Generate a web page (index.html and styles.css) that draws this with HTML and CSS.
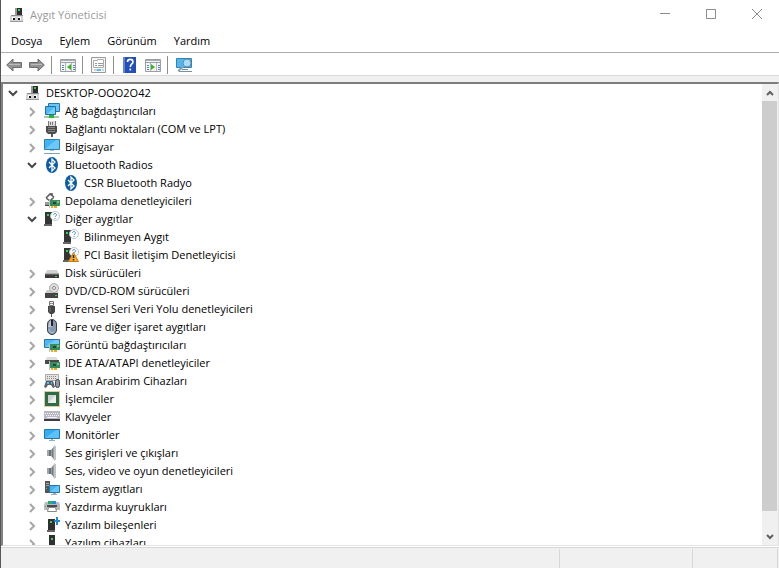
FILE: index.html
```html
<!DOCTYPE html>
<html lang="tr">
<head>
    <meta charset="UTF-8">
    <meta name="viewport" content="width=device-width, initial-scale=1.0">
    <title>Aygıt Yöneticisi</title>
    <link rel="stylesheet" href="styles.css">
</head>
<body>
    <!-- Icon set -->
    <svg class="sprite" aria-hidden="true">
        <symbol id="down" viewBox="0 0 10 10"><path d="M1 3l4 4 4-4" fill="none" stroke="#484848" stroke-width="2"/></symbol>
        <symbol id="right" viewBox="0 0 10 10"><path d="M3 1l4 4-4 4" fill="none" stroke="#a6a6a6" stroke-width="2"/></symbol>
        <symbol id="scroll-arrow" viewBox="0 0 10 10"><path d="M2 3l3 3 3-3" fill="none" stroke="#606060" stroke-width="2"/></symbol>
        <symbol id="device" viewBox="0 0 16 16">
            <path d="M6 1h2v7H6z" fill="#999"/><path d="M8 1h5v7H8z" fill="#2e2e2e"/><path d="M9 2h2v2H9z" fill="#2fd045"/>
            <path d="M2 8h12v2H2z" fill="#8e8e8e"/><path d="M1 9h13v6H1z" fill="#d4d4d8"/><path d="M1 14h13v1H1z" fill="#9b9b9f"/>
            <path d="M3 10h3v3H3zM9 10h3v3H9z" fill="#fff"/><path d="M4 11h2v2H4zM9 11h2v2H9z" fill="#111"/>
        </symbol>
        <symbol id="network" viewBox="0 0 16 16">
            <path d="M4.500.5h11v8h-11z" fill="#69c6f5" stroke="#2677a8"/><path d="M1.500 3.500h10v8h-10z" fill="#4bb7f4" stroke="#2371a3"/>
            <path d="M3 11l8-7v7z" fill="#78cffa"/><path d="M7 12h2v1H7z" fill="#999"/>
            <path d="M0 13h15v2H0z" fill="#a8c6a8"/><path d="M5 12h5v3H5z" fill="#28b33e"/>
        </symbol>
        <symbol id="port" viewBox="0 0 16 16">
            <path d="M4 0h8v5H4z" fill="#ddd"/><path d="M4.500 0v5M6.500 1v3M8.500 1v3M11.500 0v5" stroke="#777"/>
            <path d="M2 5h11v6l-2 2H4l-2-2z" fill="#4c4c4c"/><path d="M4 6.500h7M4 8.500h7M4 10.500h7" stroke="#858585"/><path d="M7 13h2v3H7z" fill="#555"/>
        </symbol>
        <symbol id="computer" viewBox="0 0 16 16">
            <path d="M.5.5h15v10H.5z" fill="#43b3f5" stroke="#2c7dac"/><path d="M1 10L12 1h3v9z" fill="#6cc8f9"/>
            <path d="M6 11h4v1H6z" fill="#aac2d0"/><path d="M0 14h16v1H0z" fill="#7fa3b8"/>
        </symbol>
        <symbol id="monitor" viewBox="0 0 16 16">
            <path d="M.5 2.500h15v9H.5z" fill="#35abf3" stroke="#2577a8"/><path d="M1 11L12 3h3v8z" fill="#5bc1f9"/>
            <path d="M7 12h2v1H7zM5 13h6v1H5z" fill="#96adba"/>
        </symbol>
        <symbol id="bluetooth" viewBox="0 0 16 16">
            <ellipse cx="8" cy="8" rx="6" ry="8" fill="#0b5ca8"/><path d="M5 5l6 6-3 3V2l3 3-6 6" fill="none" stroke="#fff" stroke-width="1.300"/>
        </symbol>
        <symbol id="card" viewBox="0 0 16 16">
            <path d="M6 7h10v6H6z" fill="#3a8a5c"/><path d="M9 9h3v2H9z" fill="#164c30"/><path d="M13 8h2v2h-2z" fill="#75c58c"/>
            <path d="M7 13h2v2H7zM10 13h3v2h-3z" fill="#efaa22"/><path d="M5.500 6v9" stroke="#b9c6be"/>
        </symbol>
        <symbol id="storage" viewBox="0 0 16 16">
            <path d="M6 1h3M2 5l4-4 4 3M2 5l4 3 4-4" fill="none" stroke="#555" stroke-width="1.500"/><path d="M1 9h5v3H1z" fill="#999"/><path d="M1 12h5v1H1z" fill="#444"/><use href="#card"/>
        </symbol>
        <symbol id="unknown" viewBox="0 0 16 16">
            <path d="M1 1h7v13H1z" fill="#353535"/><path d="M0 13h8v2H0z" fill="#666"/><path d="M3 3h2v2H3z" fill="#36d34d"/>
            <circle cx="11" cy="5" r="4.500" fill="#fff" stroke="#b8c5cc"/><path d="M9.500 4c0-2 3-2 3 0 0 1-1.500 1-1.500 2M11 7v1" fill="none" stroke="#3b8dca"/>
        </symbol>
        <symbol id="warning" viewBox="0 0 16 16">
            <use href="#unknown"/><path d="M10.500 5.500l5 9h-10z" fill="#f8ad20" stroke="#c87e12"/><path d="M10.500 8v3M10.500 12v1.500" stroke="#222" stroke-width="1.400"/>
        </symbol>
        <symbol id="disk" viewBox="0 0 16 16">
            <path d="M3 5h10l2 4H1z" fill="#d2d2d2"/><path d="M1 9h14v4H1z" fill="#3b3b3b"/><path d="M1 9h14" stroke="#888"/><path d="M11 11h2v1h-2z" fill="#3bd152"/>
        </symbol>
        <symbol id="dvd" viewBox="0 0 16 16">
            <path d="M3 7h9l3 3H1z" fill="#ccc"/><path d="M1 10h13v5H1z" fill="#444"/><circle cx="10" cy="5" r="4.500" fill="#ddd" stroke="#aaa"/><circle cx="10" cy="5" r="1.500" fill="#fff" stroke="#888"/>
            <path d="M11 12h2v1h-2z" fill="#3bd152"/>
        </symbol>
        <symbol id="usb" viewBox="0 0 16 16">
            <path d="M5.500.5h4v4h-4z" fill="#eee" stroke="#777"/><path d="M6.500 2.500h1M8.500 2.500h1" stroke="#444"/><path d="M4 5h7v6l-2 2H6l-2-2z" fill="#454545"/><path d="M6 6v5" stroke="#777"/><path d="M7 13h1v3H7z" fill="#555"/>
        </symbol>
        <symbol id="mouse" viewBox="0 0 16 16">
            <rect x="3.500" y=".5" width="9" height="15" rx="4.500" fill="#8799b0" stroke="#39404c"/><path d="M5 5c0-3 2-4 3-4v7H4z" fill="#bdc9d7"/><path d="M8 1v6" stroke="#222" stroke-width="2"/><path d="M5 10c0 4 4 4 5 3" fill="none" stroke="#b8c8dc"/>
        </symbol>
        <symbol id="display" viewBox="0 0 16 16">
            <path d="M.5 2.500h15v8H.5z" fill="#4bb8f4" stroke="#2577a8"/><path d="M1 10l10-7h4v7z" fill="#74cbf8"/><use href="#card"/>
        </symbol>
        <symbol id="ide" viewBox="0 0 16 16">
            <path d="M3 2h9l3 4H1z" fill="#ddd"/><path d="M1 5h14v4H1z" fill="#4a4a4a"/><use href="#card"/>
        </symbol>
        <symbol id="hid" viewBox="0 0 16 16">
            <path d="M1.500 1.500h13v6h-13z" fill="#e3e3e3" stroke="#aaa"/><path d="M3 3.500h10M3 5.500h10" stroke="#888" stroke-dasharray="1 1"/>
            <path d="M0 14l2-6h7l2 6-2 1-2-3H4l-2 3z" fill="#59636c"/><path d="M3 9h2v2H3zM7 9h1v2H7z" fill="#58baf1"/><rect x="11.500" y="6.500" width="4" height="8" rx="2" fill="#8b99a8" stroke="#444"/>
        </symbol>
        <symbol id="cpu" viewBox="0 0 16 16">
            <path d="M.5.5h15v15H.5z" fill="none" stroke="#c09a3e" stroke-dasharray="1 1"/><path d="M1 1h14v14H1z" fill="#2f6b49"/><path d="M4 4h8v8H4z" fill="#cfd2d0"/><path d="M12 4v8H4z" fill="#ececec"/>
        </symbol>
        <symbol id="keyboard" viewBox="0 0 16 16">
            <path d="M0 2h16v9H0z" fill="#b9b9c3"/><path d="M1 4.500h14M2 6.500h13" stroke="#f4f4f8" stroke-dasharray="1 1"/><path d="M3 8.500h10" stroke="#f4f4f8"/><path d="M0 10h16v2H0z" fill="#3c3c42"/>
        </symbol>
        <symbol id="speaker" viewBox="0 0 16 16">
            <path d="M3 5h4v6H3z" fill="#68737c"/><path d="M3 5h2v6H3z" fill="#a0a6ab"/><path d="M7 5l4-5v16l-4-5z" fill="#989ea4"/><path d="M10 1h2v14h-2z" fill="#c1c5c9"/><path d="M8.500 4v8" stroke="#747c83"/>
        </symbol>
        <symbol id="system" viewBox="0 0 16 16">
            <path d="M1 0h5v12H1z" fill="#555"/><path d="M2 2.500h3M2 4.500h3" stroke="#aaa"/><path d="M2 7h1v1H2z" fill="#3bd152"/><path d="M5.500 4.500h10v7h-10z" fill="#40b2f5" stroke="#2577a8"/><path d="M6 11l7-6h2v6z" fill="#68c7f9"/><path d="M9 12h3v1h1v1H7v-1h2z" fill="#9bb0bd"/>
        </symbol>
        <symbol id="printer" viewBox="0 0 16 16">
            <path d="M4 2h8v4H4z" fill="#1f8fdf"/><path d="M5 2h3v3H5z" fill="#32b548"/><path d="M1 3h3v2h8V3h3l1 3v5H0V6z" fill="#b7b9bd"/><path d="M3 6h10v2H3z" fill="#4a4a4a"/><path d="M1 7h1v1H1z" fill="#3bd152"/><path d="M4.500 8.500h7l1 4h-9z" fill="#fff" stroke="#888"/>
        </symbol>
        <symbol id="component" viewBox="0 0 16 16">
            <path d="M4 2h7v11H4z" fill="#303030"/><path d="M3 13h8v2H3z" fill="#666"/><path d="M6 4h2v2H6z" fill="#3bd152"/><path d="M12 0h2v3h2v2h-2v3h-2V5h-2V3h2z" fill="#2589d0"/>
        </symbol>
        <symbol id="software" viewBox="0 0 16 16">
            <path d="M5 0h6v13H5z" fill="#303030"/><path d="M4 13h9v2H4z" fill="#555"/><path d="M7 3h2v2H7z" fill="#3bd152"/>
        </symbol>
        <symbol id="back" viewBox="0 0 16 16">
            <path d="M.7 8l6.300-6v3.500h8.500v5H7V14z" fill="#939393" stroke="#6c6c6c"/><path d="M3 7.500h11" stroke="#bbb"/>
        </symbol>
        <symbol id="forward" viewBox="0 0 16 16">
            <path d="M15.300 8L9 2v3.500H.5v5H9V14z" fill="#939393" stroke="#6c6c6c"/><path d="M2 7.500h11" stroke="#bbb"/>
        </symbol>
        <symbol id="console" viewBox="0 0 16 16">
            <path d="M.5 2.500h15v12H.5z" fill="#f4f4f4" stroke="#9b9fa4"/><path d="M1 3h14v1H1z" fill="#a5acb5"/><path d="M1 5.500h14" stroke="#9aa0a8"/>
            <path d="M5.500 6v8M11.500 6v8" stroke="#b3b8be"/><path d="M2 8.500h2M2 10.500h2M2 12.500h2M13 8.500h2M13 10.500h2M13 12.500h2" stroke="#5587bd"/>
        </symbol>
        <symbol id="show" viewBox="0 0 16 16"><use href="#console"/><path d="M11 7v6l-4-3z" fill="#36b51e"/></symbol>
        <symbol id="action" viewBox="0 0 16 16"><use href="#console"/><path d="M6 7v6l4-3z" fill="#36b51e"/></symbol>
        <symbol id="properties" viewBox="0 0 16 16">
            <path d="M.5.5h14v15H.5z" fill="#f7f7f7" stroke="#999"/><path d="M2.500 3.500h4v-1h6v8h-10z" fill="#fff" stroke="#a9acae"/><path d="M4 6.500h2M4 8.500h2M7 6.500h5M7 8.500h5" stroke="#999"/><path d="M3 13h3M11 13h2" stroke="#aaa"/><path d="M6 12h4v2H6z" fill="#58bbed"/>
        </symbol>
        <symbol id="help" viewBox="0 0 16 16">
            <path d="M1 0h13v16H1z" fill="#2350b8"/><path d="M1 0h2v16H1z" fill="#6483d6"/><path d="M5.500 5c0-3.500 5.500-3.500 5.500 0 0 2-2.700 2-2.700 5M8.300 11.500v2" fill="none" stroke="#fff" stroke-width="1.600"/>
        </symbol>
        <symbol id="scan" viewBox="0 0 16 16">
            <path d="M.5 1.500h15v9H.5z" fill="#4fb8ed" stroke="#3184b1"/><path d="M6 12h6v1H6zM3 14h13v1H3z" fill="#74929f"/><circle cx="11" cy="6" r="4" fill="#a9ddf7" stroke="#668c9f"/><path d="M8 9l-6 5" stroke="#78a5be" stroke-width="2"/>
        </symbol>
    </svg>

    <!-- Title bar -->
    <header class="titlebar">
        <svg class="icon"><use href="#device"/></svg>
        <h1>Aygıt Yöneticisi</h1>
        <div class="window-buttons">
            <button type="button" aria-label="Simge durumuna küçült"><svg viewBox="0 0 10 10"><path d="M0 4.500h10"/></svg></button>
            <button type="button" aria-label="Ekranı kapla"><svg viewBox="0 0 10 10"><path d="M.5.5h9v9h-9z"/></svg></button>
            <button type="button" aria-label="Kapat"><svg viewBox="0 0 10 10"><path d="M0 0l10 10M10 0L0 10"/></svg></button>
        </div>
    </header>

    <!-- Menu -->
    <nav class="menubar">
        <button type="button">Dosya</button>
        <button type="button">Eylem</button>
        <button type="button">Görünüm</button>
        <button type="button">Yardım</button>
    </nav>

    <!-- Toolbar -->
    <div class="toolbar" role="toolbar">
        <div class="tool-group">
            <button type="button" aria-label="Geri"><svg class="icon"><use href="#back"/></svg></button>
            <button type="button" aria-label="İleri"><svg class="icon"><use href="#forward"/></svg></button>
        </div>
        <div class="tool-group">
            <button type="button" aria-label="Konsol ağacı"><svg class="icon"><use href="#show"/></svg></button>
        </div>
        <div class="tool-group">
            <button type="button" aria-label="Özellikler"><svg class="icon"><use href="#properties"/></svg></button>
        </div>
        <div class="tool-group">
            <button type="button" aria-label="Yardım"><svg class="icon"><use href="#help"/></svg></button>
            <button type="button" aria-label="Eylem bölmesi"><svg class="icon"><use href="#action"/></svg></button>
        </div>
        <div class="tool-group">
            <button type="button" aria-label="Donanım değişikliklerini tara"><svg class="icon"><use href="#scan"/></svg></button>
        </div>
    </div>

    <!-- Device tree -->
    <main class="panel">
        <ul class="tree">
            <li>
                <div class="row"><button type="button" class="toggle" aria-label="Daralt"><svg><use href="#down"/></svg></button><svg class="icon"><use href="#device"/></svg><span>DESKTOP-OOO2O42</span></div>
                <ul>
                    <li><div class="row"><button type="button" class="toggle closed" aria-label="Genişlet"><svg><use href="#right"/></svg></button><svg class="icon"><use href="#network"/></svg><span>Ağ bağdaştırıcıları</span></div></li>
                    <li><div class="row"><button type="button" class="toggle closed" aria-label="Genişlet"><svg><use href="#right"/></svg></button><svg class="icon"><use href="#port"/></svg><span>Bağlantı noktaları (COM ve LPT)</span></div></li>
                    <li><div class="row"><button type="button" class="toggle closed" aria-label="Genişlet"><svg><use href="#right"/></svg></button><svg class="icon"><use href="#computer"/></svg><span>Bilgisayar</span></div></li>
                    <li>
                        <div class="row"><button type="button" class="toggle" aria-label="Daralt"><svg><use href="#down"/></svg></button><svg class="icon"><use href="#bluetooth"/></svg><span>Bluetooth Radios</span></div>
                        <ul>
                            <li><div class="row leaf"><svg class="icon"><use href="#bluetooth"/></svg><span>CSR Bluetooth Radyo</span></div></li>
                        </ul>
                    </li>
                    <li><div class="row"><button type="button" class="toggle closed" aria-label="Genişlet"><svg><use href="#right"/></svg></button><svg class="icon"><use href="#storage"/></svg><span>Depolama denetleyicileri</span></div></li>
                    <li>
                        <div class="row"><button type="button" class="toggle" aria-label="Daralt"><svg><use href="#down"/></svg></button><svg class="icon"><use href="#unknown"/></svg><span>Diğer aygıtlar</span></div>
                        <ul>
                            <li><div class="row leaf"><svg class="icon"><use href="#unknown"/></svg><span>Bilinmeyen Aygıt</span></div></li>
                            <li><div class="row leaf"><svg class="icon"><use href="#warning"/></svg><span>PCI Basit İletişim Denetleyicisi</span></div></li>
                        </ul>
                    </li>
                    <li><div class="row"><button type="button" class="toggle closed" aria-label="Genişlet"><svg><use href="#right"/></svg></button><svg class="icon"><use href="#disk"/></svg><span>Disk sürücüleri</span></div></li>
                    <li><div class="row"><button type="button" class="toggle closed" aria-label="Genişlet"><svg><use href="#right"/></svg></button><svg class="icon"><use href="#dvd"/></svg><span>DVD/CD-ROM sürücüleri</span></div></li>
                    <li><div class="row"><button type="button" class="toggle closed" aria-label="Genişlet"><svg><use href="#right"/></svg></button><svg class="icon"><use href="#usb"/></svg><span>Evrensel Seri Veri Yolu denetleyicileri</span></div></li>
                    <li><div class="row"><button type="button" class="toggle closed" aria-label="Genişlet"><svg><use href="#right"/></svg></button><svg class="icon"><use href="#mouse"/></svg><span>Fare ve diğer işaret aygıtları</span></div></li>
                    <li><div class="row"><button type="button" class="toggle closed" aria-label="Genişlet"><svg><use href="#right"/></svg></button><svg class="icon"><use href="#display"/></svg><span>Görüntü bağdaştırıcıları</span></div></li>
                    <li><div class="row"><button type="button" class="toggle closed" aria-label="Genişlet"><svg><use href="#right"/></svg></button><svg class="icon"><use href="#ide"/></svg><span>IDE ATA/ATAPI denetleyiciler</span></div></li>
                    <li><div class="row"><button type="button" class="toggle closed" aria-label="Genişlet"><svg><use href="#right"/></svg></button><svg class="icon"><use href="#hid"/></svg><span>İnsan Arabirim Cihazları</span></div></li>
                    <li><div class="row"><button type="button" class="toggle closed" aria-label="Genişlet"><svg><use href="#right"/></svg></button><svg class="icon"><use href="#cpu"/></svg><span>İşlemciler</span></div></li>
                    <li><div class="row"><button type="button" class="toggle closed" aria-label="Genişlet"><svg><use href="#right"/></svg></button><svg class="icon"><use href="#keyboard"/></svg><span>Klavyeler</span></div></li>
                    <li><div class="row"><button type="button" class="toggle closed" aria-label="Genişlet"><svg><use href="#right"/></svg></button><svg class="icon"><use href="#monitor"/></svg><span>Monitörler</span></div></li>
                    <li><div class="row"><button type="button" class="toggle closed" aria-label="Genişlet"><svg><use href="#right"/></svg></button><svg class="icon"><use href="#speaker"/></svg><span>Ses girişleri ve çıkışları</span></div></li>
                    <li><div class="row"><button type="button" class="toggle closed" aria-label="Genişlet"><svg><use href="#right"/></svg></button><svg class="icon"><use href="#speaker"/></svg><span>Ses, video ve oyun denetleyicileri</span></div></li>
                    <li><div class="row"><button type="button" class="toggle closed" aria-label="Genişlet"><svg><use href="#right"/></svg></button><svg class="icon"><use href="#system"/></svg><span>Sistem aygıtları</span></div></li>
                    <li><div class="row"><button type="button" class="toggle closed" aria-label="Genişlet"><svg><use href="#right"/></svg></button><svg class="icon"><use href="#printer"/></svg><span>Yazdırma kuyrukları</span></div></li>
                    <li><div class="row"><button type="button" class="toggle closed" aria-label="Genişlet"><svg><use href="#right"/></svg></button><svg class="icon"><use href="#component"/></svg><span>Yazılım bileşenleri</span></div></li>
                    <li><div class="row"><button type="button" class="toggle closed" aria-label="Genişlet"><svg><use href="#right"/></svg></button><svg class="icon"><use href="#software"/></svg><span>Yazılım cihazları</span></div></li>
                </ul>
            </li>
        </ul>
        <div class="scrollbar">
            <button type="button" aria-label="Yukarı kaydır"><svg class="up"><use href="#scroll-arrow"/></svg></button>
            <div class="track"><div class="thumb"></div></div>
            <button type="button" aria-label="Aşağı kaydır"><svg><use href="#scroll-arrow"/></svg></button>
        </div>
    </main>

    <!-- Status bar -->
    <footer class="statusbar">
        <div class="status-main"></div>
        <div class="status-mid"></div>
        <div class="status-end"></div>
    </footer>
</body>
</html>
```
FILE: styles.css
```css
* {
    margin: 0;
    padding: 0;
    box-sizing: border-box;
}

body {
    font-family: "Open Sans", "Noto Sans", sans-serif;
    font-size: 11px;
    line-height: 18px;
    color: #000;
    background-color: #fff;
    display: flex;
    flex-direction: column;
    height: 100vh;
    overflow: hidden;
    border-left: 1px solid #55555a;
}

button {
    font: inherit;
    color: inherit;
    background: none;
    border: none;
}

svg {
    display: block;
    flex-shrink: 0;
}

.sprite {
    position: absolute;
    width: 0;
    height: 0;
}

.icon {
    width: 16px;
    height: 16px;
}

/* Title bar */
.titlebar {
    display: flex;
    align-items: center;
    height: 30px;
    padding-left: 8px;
    gap: 5px;
}

.titlebar h1 {
    flex: 1;
    font-size: 11px;
    font-weight: normal;
    color: #999;
}

.window-buttons {
    display: flex;
}

.window-buttons button {
    width: 46px;
    height: 30px;
    display: flex;
    align-items: center;
    justify-content: center;
    padding: 0 0 2px 2px;
}

.window-buttons svg {
    width: 10px;
    height: 10px;
    fill: none;
    stroke: #8c8c8c;
}

/* Menu */
.menubar {
    display: flex;
    align-items: center;
    gap: 17px;
    height: 23px;
    padding-left: 10px;
    border-bottom: 1px solid #adadad;
}

/* Toolbar */
.toolbar {
    display: flex;
    align-items: center;
    height: 23px;
    padding-top: 1px;
    padding-left: 5px;
    border-bottom: 1px solid #dadada;
}

.tool-group {
    display: flex;
    align-items: center;
    gap: 7px;
    height: 18px;
    padding-right: 6px;
    margin-right: 8px;
    border-right: 1px solid #8f8f8f;
}

.tool-group:last-child {
    border-right: none;
}

/* Device tree */
.panel {
    flex: 1;
    min-height: 0;
    display: flex;
    margin-top: 6px;
    border-top: 2px solid #7c7c7c;
    border-left: 2px solid #828282;
    border-right: 1px solid #e3e3e3;
    border-bottom: 1px solid #e3e3e3;
    box-shadow: 0 -6px 0 #f0f0f0;
}

.tree {
    flex: 1;
    overflow: hidden;
    padding-left: 1px;
}

.tree ul {
    padding-left: 19px;
}

.tree li {
    list-style: none;
}

.row {
    display: flex;
    align-items: center;
    height: 18px;
    white-space: nowrap;
}

.row .icon {
    margin: 0 5px 0 2px;
}

.leaf {
    padding-left: 19px;
}

.toggle {
    width: 19px;
    height: 18px;
    display: flex;
    align-items: center;
    justify-content: center;
    padding-right: 1px;
}

.toggle svg,
.scrollbar svg {
    width: 10px;
    height: 10px;
}

.closed {
    padding-top: 2px;
}

.scrollbar {
    width: 16px;
    display: flex;
    flex-direction: column;
    background-color: #f0f0f0;
}

.scrollbar button {
    height: 17px;
    display: flex;
    align-items: center;
    justify-content: center;
    padding-right: 1px;
}

.up {
    transform: rotate(180deg);
}

.track {
    flex: 1;
}

.thumb {
    width: 15px;
    height: 96%;
    background-color: #cdcdcd;
}

/* Status bar */
.statusbar {
    display: flex;
    height: 21px;
    margin-top: 1px;
    padding-top: 1px;
    padding-right: 1px;
    background-color: #f0f0f0;
    border-top: 1px solid #d7d7d7;
}

.statusbar div {
    border-right: 1px solid #d7d7d7;
}

.status-main {
    flex: 1;
}

.status-mid {
    width: 133px;
}

.status-end {
    width: 85px;
}
```
